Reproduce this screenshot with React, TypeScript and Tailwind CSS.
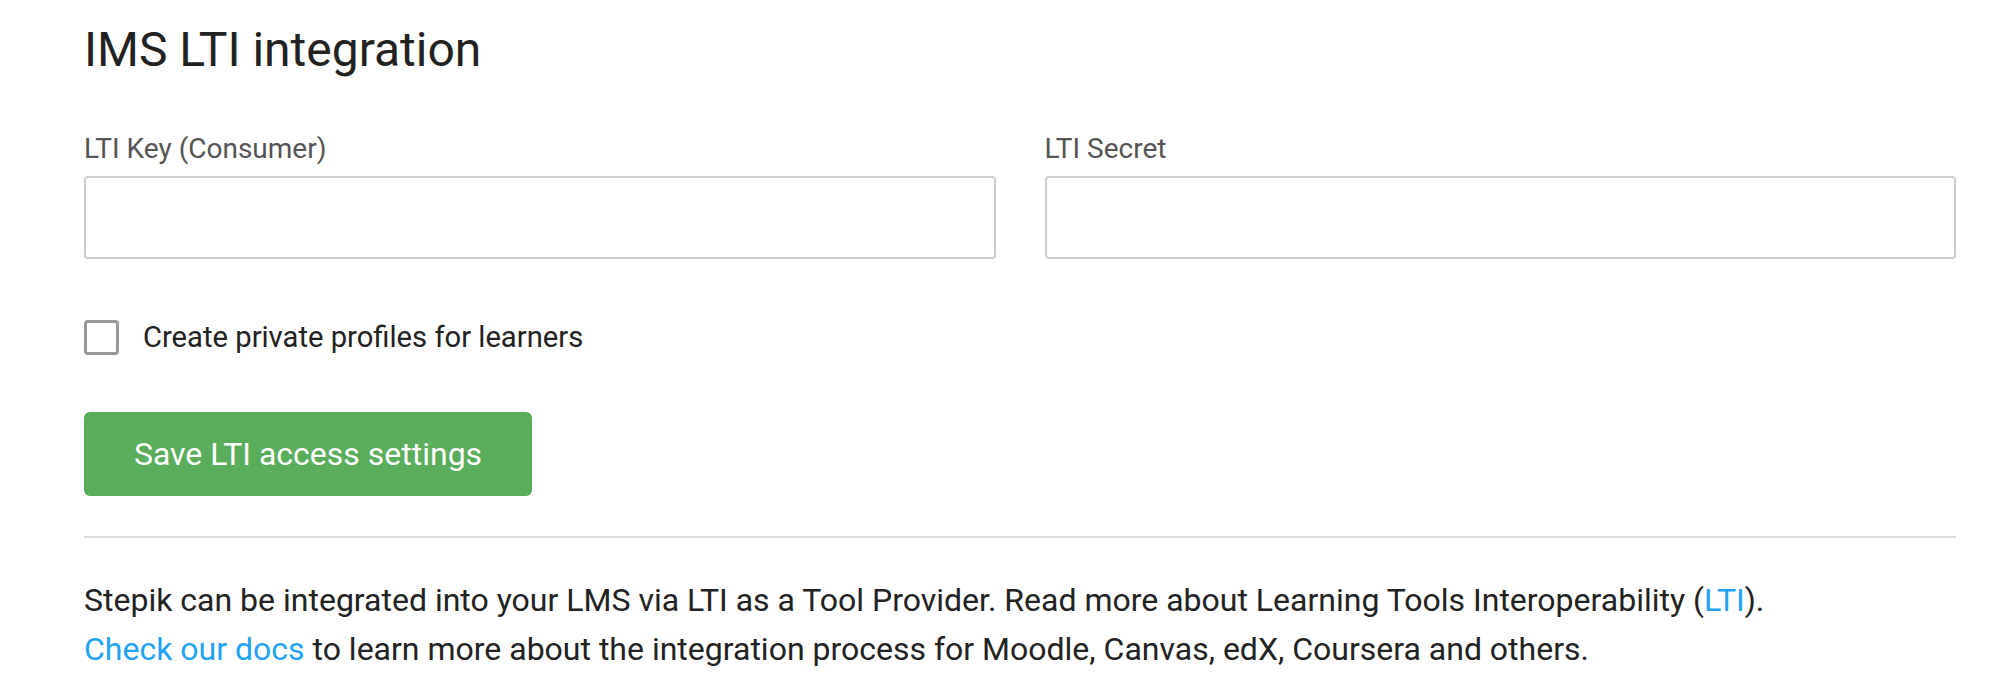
import React from "react";

export default function App() {
  return (
    <div className="min-h-[696px] w-[1992px] bg-white text-[#222222]" style={{ fontFamily: "Roboto, 'Noto Sans', sans-serif" }}>
      <div className="ml-[84px] w-[1872px] pt-[22px]">
        <h1 className="text-[48px] leading-[56px] font-normal text-[#222222]">IMS LTI integration</h1>

        <div className="mt-[55px] grid grid-cols-2 gap-x-[49px]">
          <div className="flex flex-col">
            <label className="text-[28px] leading-[32px] text-[#555555]">LTI Key (Consumer)</label>
            <input type="text" className="mt-[11px] h-[83px] w-full rounded-[4px] border-2 border-[#cdcdcd] bg-white px-4 outline-none" />
          </div>
          <div className="flex flex-col">
            <label className="text-[28px] leading-[32px] text-[#555555]">LTI Secret</label>
            <input type="password" className="mt-[11px] h-[83px] w-full rounded-[4px] border-2 border-[#cdcdcd] bg-white px-4 outline-none" />
          </div>
        </div>

        <label className="mt-[60px] flex items-center gap-[24px]">
          <span className="block h-[35px] w-[35px] rounded-[4px] border-[3px] border-[#999999] bg-white" />
          <span className="text-[29.2px] leading-[36px] text-[#222222]">Create private profiles for learners</span>
        </label>

        <button className="mt-[57px] flex h-[84px] w-[448px] items-center justify-center rounded-[6px] bg-[#5aad5b] text-[32px] text-white">
          Save LTI access settings
        </button>

        <div className="mt-[40px] h-[2px] w-full bg-[#dddddd]" />

        <div className="mt-[38px] text-[32px] leading-[49px] text-[#222222]">
          <p>
            Stepik can be integrated into your LMS via LTI as a Tool Provider. Read more about Learning Tools Interoperability (
            <a className="text-[#22a3f2]">LTI</a>).
          </p>
          <p>
            <a className="text-[#22a3f2]">Check our docs</a> to learn more about the integration process for Moodle, Canvas, edX, Coursera and others.
          </p>
        </div>
      </div>
    </div>
  );
}
